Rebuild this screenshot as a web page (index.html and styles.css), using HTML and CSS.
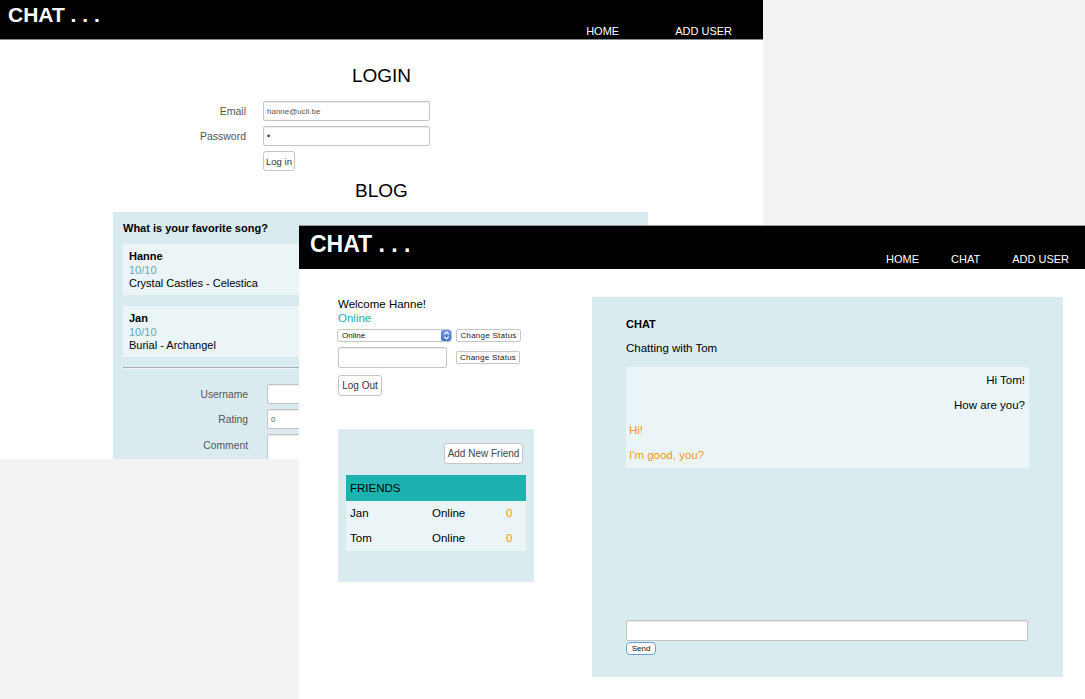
FILE: index.html
```html
<!DOCTYPE html>
<html lang="en">
<head>
<meta charset="utf-8">
<title>Chat</title>
<link rel="stylesheet" href="styles.css">
</head>
<body>
<div class="desktop">

  <section class="window back">
    <header class="bar bar-back">
      <div class="brand brand-back">CHAT . . .</div>
      <nav class="nav nav-back">
        <a>HOME</a>
        <a>ADD USER</a>
      </nav>
    </header>
    <main class="back-main">
      <h1 class="page-title login-title">LOGIN</h1>
      <form class="login-form">
        <label class="lbl">Email</label>
        <div class="input"><span class="val">hanne@ucll.be</span></div>
        <label class="lbl">Password</label>
        <div class="input"><span class="val dot">•</span></div>
        <button type="button" class="btn btn-login">Log in</button>
      </form>
      <h2 class="page-title blog-title">BLOG</h2>
      <div class="blog">
        <div class="blog-q">What is your favorite song?</div>
        <div class="card">
          <div class="c-name">Hanne</div>
          <div class="c-rate">10/10</div>
          <div class="c-text">Crystal Castles - Celestica</div>
        </div>
        <div class="card">
          <div class="c-name">Jan</div>
          <div class="c-rate">10/10</div>
          <div class="c-text">Burial - Archangel</div>
        </div>
        <div class="hr"></div>
        <div class="blog-form">
          <label class="lbl">Username</label>
          <div class="input"></div>
          <label class="lbl">Rating</label>
          <div class="input"><span class="val">0</span></div>
          <label class="lbl">Comment</label>
          <div class="input textarea"></div>
        </div>
      </div>
    </main>
  </section>

  <section class="window front">
    <header class="bar bar-front">
      <div class="brand brand-front">CHAT . . .</div>
      <nav class="nav nav-front">
        <a>HOME</a>
        <a>CHAT</a>
        <a>ADD USER</a>
      </nav>
    </header>
    <main class="front-main">
      <div class="side">
        <div class="welcome">Welcome Hanne!</div>
        <div class="status">Online</div>
        <div class="row row-select">
          <div class="select">
            <span class="sel-text">Online</span>
            <span class="sel-arrow">
              <svg width="9" height="11" viewBox="0 0 9 11"><path d="M2.2 4.2 L4.5 2 L6.8 4.2 M2.2 6.8 L4.5 9 L6.8 6.8" fill="none" stroke="#fff" stroke-width="1.2"/></svg>
            </span>
          </div>
          <button type="button" class="btn btn-small">Change Status</button>
        </div>
        <div class="row row-input">
          <div class="input status-input"></div>
          <button type="button" class="btn btn-small btn-small2">Change Status</button>
        </div>
        <button type="button" class="btn btn-logout">Log Out</button>

        <div class="friends">
          <div class="friends-top">
            <button type="button" class="btn btn-add">Add New Friend</button>
          </div>
          <div class="f-table">
            <div class="f-head">FRIENDS</div>
            <div class="f-row"><span class="f-name">Jan</span><span class="f-stat">Online</span><span class="f-count">0</span></div>
            <div class="f-row"><span class="f-name">Tom</span><span class="f-stat">Online</span><span class="f-count">0</span></div>
          </div>
        </div>
      </div>

      <div class="chat">
        <div class="chat-title">CHAT</div>
        <div class="chat-with">Chatting with Tom</div>
        <div class="messages">
          <p class="msg mine">Hi Tom!</p>
          <p class="msg mine">How are you?</p>
          <p class="msg theirs">Hi!</p>
          <p class="msg theirs">I'm good, you?</p>
        </div>
        <div class="composer">
          <div class="input chat-input"></div>
          <button type="button" class="btn btn-send">Send</button>
        </div>
      </div>
    </main>
  </section>

</div>
</body>
</html>
```

FILE: styles.css
```css
* { box-sizing: border-box; }

html, body {
  margin: 0;
  padding: 0;
  background: #f3f3f3;
  font-family: "Liberation Sans", Arial, sans-serif;
  color: #000;
}

.desktop {
  position: relative;
  width: 1085px;
  height: 699px;
  overflow: hidden;
  background: #f3f3f3;
}

.window {
  position: absolute;
  background: #fff;
  overflow: hidden;
}

.back {
  left: 0;
  top: 0;
  width: 763px;
  height: 459px;
}

.front {
  left: 299px;
  top: 225px;
  width: 786px;
  height: 474px;
  border-top: 1px solid #9c9c9c;
}

/* header bars */
.bar {
  display: flex;
  background: #000;
  color: #fff;
}

.bar-back {
  height: 40px;
  border-bottom: 1px solid #8a8a8a;
}

.bar-front {
  height: 43px;
}

.brand {
  font-weight: bold;
  white-space: nowrap;
}

.brand-back {
  font-size: 21px;
  line-height: 24px;
  padding: 3px 0 0 8px;
}

.brand-front {
  font-size: 23px;
  line-height: 26px;
  padding: 5px 0 0 11px;
}

.nav {
  margin-left: auto;
  display: flex;
  font-size: 11px;
  line-height: 13px;
  white-space: nowrap;
}

.nav-back {
  gap: 56px;
  padding: 25px 31px 0 0;
}

.nav-front {
  gap: 32px;
  padding: 27px 16px 0 0;
}

/* back window */
.back-main {
  display: flex;
  flex-direction: column;
}

.page-title {
  margin: 0;
  font-size: 19px;
  line-height: 22px;
  font-weight: normal;
  text-align: center;
}

.login-title { margin-top: 25px; }

.login-form {
  margin: 14px 0 0 186px;
  display: grid;
  grid-template-columns: 60px 167px;
  grid-auto-rows: 20px;
  column-gap: 17px;
  row-gap: 5px;
}

.lbl {
  font-size: 10.5px;
  color: #555;
  text-align: right;
  align-self: center;
  white-space: nowrap;
}

.input {
  background: #fff;
  border: 1px solid #c4c4c4;
  border-radius: 2px;
  box-shadow: inset 0 1px 1px rgba(0,0,0,0.08);
  display: flex;
  align-items: center;
  padding-left: 3px;
}

.val {
  font-size: 8px;
  color: #555;
}

.dot { font-size: 9px; color: #333; }

.btn {
  font-family: "Liberation Sans", Arial, sans-serif;
  background: #fff;
  border: 1px solid #c6c6c6;
  border-radius: 3px;
  color: #333;
  padding: 0;
  margin: 0;
  white-space: nowrap;
}

.btn-login {
  grid-column: 2;
  width: 32px;
  height: 20px;
  font-size: 9.5px;
}

.blog-title { margin-top: 9px; }

.blog {
  margin: 10px 0 0 113px;
  width: 535px;
  background: #d9ebef;
  padding: 10px 10px 10px 10px;
}

.blog-q {
  font-size: 11px;
  line-height: 13px;
  font-weight: bold;
  margin-bottom: 9px;
}

.card {
  background: #ebf5f8;
  height: 51px;
  padding: 6px 6px 0 6px;
  font-size: 11px;
  line-height: 13.5px;
  margin-bottom: 11px;
}

.c-name { font-weight: bold; }
.c-rate { color: #6aa6a8; }

.hr {
  margin-top: -1px;
  border-top: 1px solid #a6aeb0;
  border-bottom: 1px solid #eef5f7;
}

.blog-form {
  margin: 15px 0 0 67px;
  display: grid;
  grid-template-columns: 58px 200px;
  grid-template-rows: 20px 20px 40px;
  column-gap: 19px;
  row-gap: 5px;
}

.blog-form .lbl { align-self: start; line-height: 21px; font-size: 10.3px; }
.blog-form .lbl:nth-of-type(3) { line-height: 23px; }

.textarea { height: 40px; }

/* front window */
.front-main {
  display: grid;
  grid-template-columns: 196px 471px;
  column-gap: 58px;
  padding: 28px 0 0 39px;
  align-items: start;
}

.side {
  display: flex;
  flex-direction: column;
  align-items: flex-start;
  font-size: 11.5px;
  line-height: 14px;
}

.status { color: #20b0a8; }

.row {
  display: flex;
  align-items: center;
}

.row-select { margin-top: 4px; margin-left: -1px; }

.select {
  width: 115px;
  height: 13px;
  border: 1px solid #c4c4c4;
  border-radius: 3px;
  background: #fff;
  display: flex;
  align-items: center;
  justify-content: space-between;
  overflow: hidden;
}

.sel-text {
  font-size: 8px;
  line-height: 11px;
  padding-left: 4px;
  color: #111;
}

.sel-arrow {
  width: 10px;
  height: 11px;
  background: linear-gradient(#6f9be6, #3d6fd0);
  border-radius: 2px;
  display: flex;
  align-items: center;
  justify-content: center;
}

.btn-small {
  height: 13px;
  width: 65px;
  font-size: 8px;
  letter-spacing: 0.25px;
  margin-left: 4px;
  border-radius: 2px;
  color: #222;
}

.row-input { margin-top: 5px; }

.status-input {
  width: 109px;
  height: 21px;
}

.btn-small2 { margin-left: 9px; width: 64px; }

.btn-logout {
  margin-top: 7px;
  width: 44px;
  height: 21px;
  font-size: 10px;
  color: #333;
}

.friends {
  margin-top: 33px;
  width: 196px;
  height: 153px;
  background: #d9ebef;
  padding: 14px 8px 0 8px;
}

.friends-top {
  display: flex;
  justify-content: flex-end;
  padding-right: 3px;
}

.btn-add {
  width: 79px;
  height: 21px;
  font-size: 10px;
  color: #444;
}

.f-table {
  margin-top: 11px;
  font-size: 11.5px;
}

.f-head {
  background: #1bb2b0;
  height: 26px;
  line-height: 26px;
  padding-left: 4px;
}

.f-row {
  background: #ebf5f8;
  height: 25px;
  display: grid;
  grid-template-columns: 82px 74px 1fr;
  align-items: center;
  padding-left: 4px;
  padding-bottom: 1px;
}

.f-count { color: #f7941d; }

.chat {
  height: 380px;
  background: #d9ebef;
  padding: 21px 34px 22px 34px;
  display: flex;
  flex-direction: column;
}

.chat-title {
  font-size: 11px;
  line-height: 13px;
  font-weight: bold;
}

.chat-with {
  margin-top: 10px;
  font-size: 11.5px;
  line-height: 14px;
}

.messages {
  margin-top: 12px;
  width: 403px;
  background: #ebf5f8;
  padding: 6px 4px 6px 3px;
}

.msg {
  margin: 0 0 11px 0;
  font-size: 11.5px;
  line-height: 14px;
}

.msg:last-child { margin-bottom: 0; }

.mine { text-align: right; }
.theirs { color: #f7941d; }

.composer {
  margin-top: auto;
  display: flex;
  flex-direction: column;
  align-items: flex-start;
}

.chat-input {
  width: 402px;
  height: 21px;
}

.btn-send {
  margin-top: 1px;
  width: 30px;
  height: 13px;
  font-size: 8px;
  border: 1px solid #6a9fe0;
  border-radius: 4px;
  color: #111;
}
```
